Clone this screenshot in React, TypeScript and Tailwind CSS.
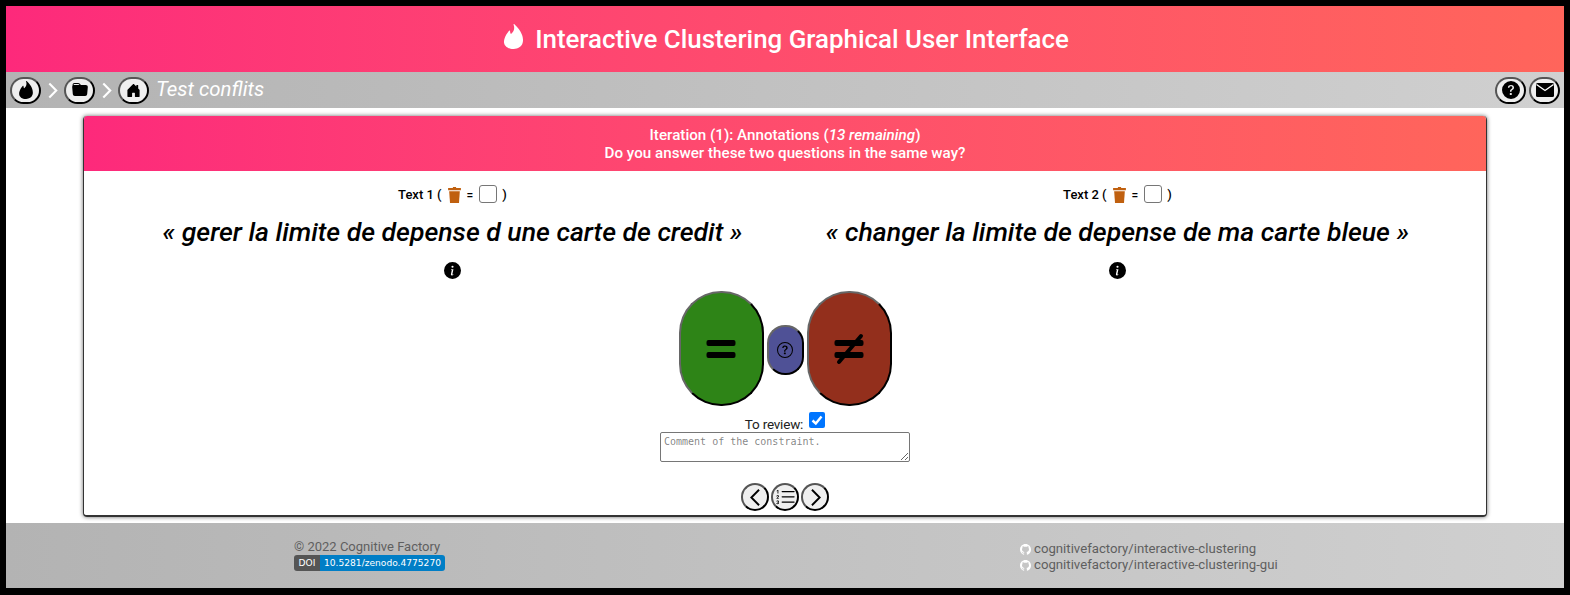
import React from "react";
import { SiTinder } from "react-icons/si";
import {
  BsFolderFill,
  BsHouseDoorFill,
  BsQuestionCircleFill,
  BsQuestionCircle,
  BsInfoCircleFill,
  BsListOl,
  BsGithub,
} from "react-icons/bs";

function RoundButton({ children }: { children: React.ReactNode }) {
  return (
    <button className="flex items-center justify-center w-[31px] h-[27px] rounded-[14px] border-2 border-t-[#555] border-l-[#555] border-r-black border-b-black bg-[#efefef] text-black">
      {children}
    </button>
  );
}

function NavButton({ children }: { children: React.ReactNode }) {
  return (
    <button className="flex items-center justify-center w-[28px] h-[28px] rounded-full border-2 border-t-[#555] border-l-[#555] border-r-black border-b-black bg-[#efefef] text-black">
      {children}
    </button>
  );
}

function Chevron({ dir, size, width, color }: { dir: "left" | "right"; size: number; width: number; color: string }) {
  return (
    <svg width={size} height={size} viewBox="0 0 16 16">
      <path
        d={dir === "right" ? "M5 1.5 L11.5 8 L5 14.5" : "M11 1.5 L4.5 8 L11 14.5"}
        fill="none"
        stroke={color}
        strokeWidth={width}
      />
    </svg>
  );
}

function Trash() {
  return (
    <svg width="13" height="16" viewBox="0 0 12 15" className="mx-[6px]">
      <path d="M4.5 0 H7.5 V1 H12 V3 H0 V1 H4.5 Z" fill="#c0600f" />
      <path d="M1 4 H11 L10.2 15 H1.8 Z" fill="#c0600f" />
    </svg>
  );
}

function TextColumn({ label, text }: { label: string; text: string }) {
  return (
    <div className="w-[665px] flex flex-col items-center">
      <div className="flex items-center h-[20px] mt-[14px] text-[13px] font-medium text-black">
        <span>{label} (</span>
        <Trash />
        <span className="text-[12px]">=</span>
        <span className="w-[18px] h-[18px] ml-[6px] mr-[5px] mb-[3px] rounded-[3px] border border-[#767676] bg-white" />
        <span>)</span>
      </div>
      <div className="mt-[10px] mb-[1px] h-[34px] text-[26.6px] leading-[34px] font-medium italic text-black whitespace-nowrap">
        « {text} »
      </div>
      <BsInfoCircleFill className="mt-[12px] text-[17px] text-black" />
    </div>
  );
}

export default function App() {
  return (
    <div className="w-[1570px] h-[595px] flex flex-col bg-white border-black border-t-[6px] border-l-[6px] border-r-[6px] border-b-[7px] font-['Roboto',sans-serif] overflow-hidden">
      <header className="h-[66px] shrink-0 flex items-center justify-center gap-[9px] bg-linear-to-r from-[#fd297b] to-[#ff655b] text-white">
        <SiTinder className="text-[25px] mb-[5px]" />
        <h1 className="text-[25.9px] font-medium">Interactive Clustering Graphical User Interface</h1>
      </header>

      <nav className="h-[36px] shrink-0 flex items-center px-[4px] bg-linear-to-r from-[#b3b3b3] to-[#d0d0d0]">
        <RoundButton><SiTinder className="text-[18px]" /></RoundButton>
        <span className="mx-[3px]"><Chevron dir="right" size={17} width={2} color="white" /></span>
        <RoundButton><BsFolderFill className="text-[16px]" /></RoundButton>
        <span className="mx-[3px]"><Chevron dir="right" size={17} width={2} color="white" /></span>
        <RoundButton><BsHouseDoorFill className="text-[15px]" /></RoundButton>
        <span className="ml-[7px] mb-[2px] text-[20.4px] italic text-white">Test conflits</span>
        <div className="ml-auto flex gap-[3px]">
          <RoundButton><BsQuestionCircleFill className="text-[18px]" /></RoundButton>
          <RoundButton>
            <svg width="18" height="14" viewBox="0 0 18 14">
              <rect x="0" y="0" width="18" height="14" rx="1.5" fill="black" />
              <path d="M0.5 1.5 L9 7.5 L17.5 1.5" fill="none" stroke="white" strokeWidth="1.4" />
            </svg>
          </RoundButton>
        </div>
      </nav>

      <main className="flex-1 flex flex-col px-[77px] pt-[8px] pb-[6px]">
        <section className="flex-1 flex flex-col rounded-[4px] overflow-hidden border-b-2 border-r border-l border-[#333] shadow-[0_0_4px_rgba(0,0,0,0.6)]">
          <div className="h-[55px] shrink-0 flex flex-col items-center justify-center bg-linear-to-r from-[#fd297b] to-[#ff655b] text-white text-[15.2px] font-medium leading-[18px]">
            <div>Iteration (1): Annotations (<em>13 remaining</em>)</div>
            <div>Do you answer these two questions in the same way?</div>
          </div>

          <div className="flex justify-center">
            <TextColumn label="Text 1" text="gerer la limite de depense d une carte de credit" />
            <TextColumn label="Text 2" text="changer la limite de depense de ma carte bleue" />
          </div>

          <div className="flex items-center justify-center gap-[3px] mt-[12px]">
            <button className="flex items-center justify-center w-[85px] h-[115px] rounded-[42px] border-2 border-t-[#666] border-l-[#666] border-r-black border-b-black bg-[#2e8417]">
              <svg width="30" height="20" viewBox="0 0 30 20">
                <rect x="0.5" y="1" width="29" height="6" rx="2" fill="black" />
                <rect x="0.5" y="13" width="29" height="6" rx="2" fill="black" />
              </svg>
            </button>
            <button className="flex items-center justify-center w-[37px] h-[50px] mt-[2px] rounded-[18px] border-2 border-t-[#666] border-l-[#666] border-r-black border-b-black bg-[#4f5196]">
              <BsQuestionCircle className="text-[16px] text-black" />
            </button>
            <button className="flex items-center justify-center w-[85px] h-[115px] rounded-[42px] border-2 border-t-[#666] border-l-[#666] border-r-black border-b-black bg-[#932f1c]">
              <svg width="30" height="32" viewBox="0 0 30 32">
                <rect x="0.5" y="7" width="29" height="6" rx="2" fill="black" />
                <rect x="0.5" y="19" width="29" height="6" rx="2" fill="black" />
                <path d="M27 3 L5 29" stroke="black" strokeWidth="4" strokeLinecap="round" />
              </svg>
            </button>
          </div>

          <div className="flex flex-col items-center mt-[6px]">
            <div className="flex items-center h-[20px] gap-[6px] text-[13.5px] tracking-[-0.2px] text-[#222]">
              <span className="mt-[4px]">To review:</span>
              <span className="flex items-center justify-center w-[16px] h-[16px] mb-[4px] rounded-[2px] bg-[#0075ff] text-white">
                <svg width="12" height="12" viewBox="0 0 12 12">
                  <path d="M1.5 6.5 L4.8 9.5 L10.5 2.5" fill="none" stroke="white" strokeWidth="2.4" />
                </svg>
              </span>
            </div>
            <textarea
              readOnly
              placeholder="Comment of the constraint."
              className="block w-[250px] h-[30px] px-[3px] pt-[3px] pb-0 rounded-[2px] border border-[#767676] font-['DejaVu_Sans_Mono',monospace] text-[10px] leading-[12px]"
            />
          </div>

          <div className="mt-auto mb-[4px] flex justify-center gap-[2px]">
            <NavButton><Chevron dir="left" size={19} width={1.6} color="black" /></NavButton>
            <NavButton><BsListOl className="text-[21px]" /></NavButton>
            <NavButton><Chevron dir="right" size={19} width={1.6} color="black" /></NavButton>
          </div>
        </section>
      </main>

      <footer className="h-[65px] shrink-0 flex bg-linear-to-r from-[#b3b3b3] to-[#d0d0d0] text-[#5f5f5f] text-[13px] leading-[15px]">
        <div className="ml-[288px] mt-[16px]">
          <div>© 2022 Cognitive Factory</div>
          <div className="mt-px flex w-[151px] h-[16px] rounded-[3px] overflow-hidden text-white text-[9.1px] font-medium leading-[16px] font-['DejaVu_Sans',sans-serif]">
            <span className="w-[26px] text-center bg-[#555]">DOI</span>
            <span className="flex-1 text-center bg-[#007ec6] whitespace-nowrap">10.5281/zenodo.4775270</span>
          </div>
        </div>
        <div className="ml-[575px] mt-[18px] text-[13.2px] leading-[16px]">
          <div className="flex items-center gap-[3px]"><BsGithub className="text-[11px] text-white" />cognitivefactory/interactive-clustering</div>
          <div className="flex items-center gap-[3px]"><BsGithub className="text-[11px] text-white" />cognitivefactory/interactive-clustering-gui</div>
        </div>
      </footer>
    </div>
  );
}
